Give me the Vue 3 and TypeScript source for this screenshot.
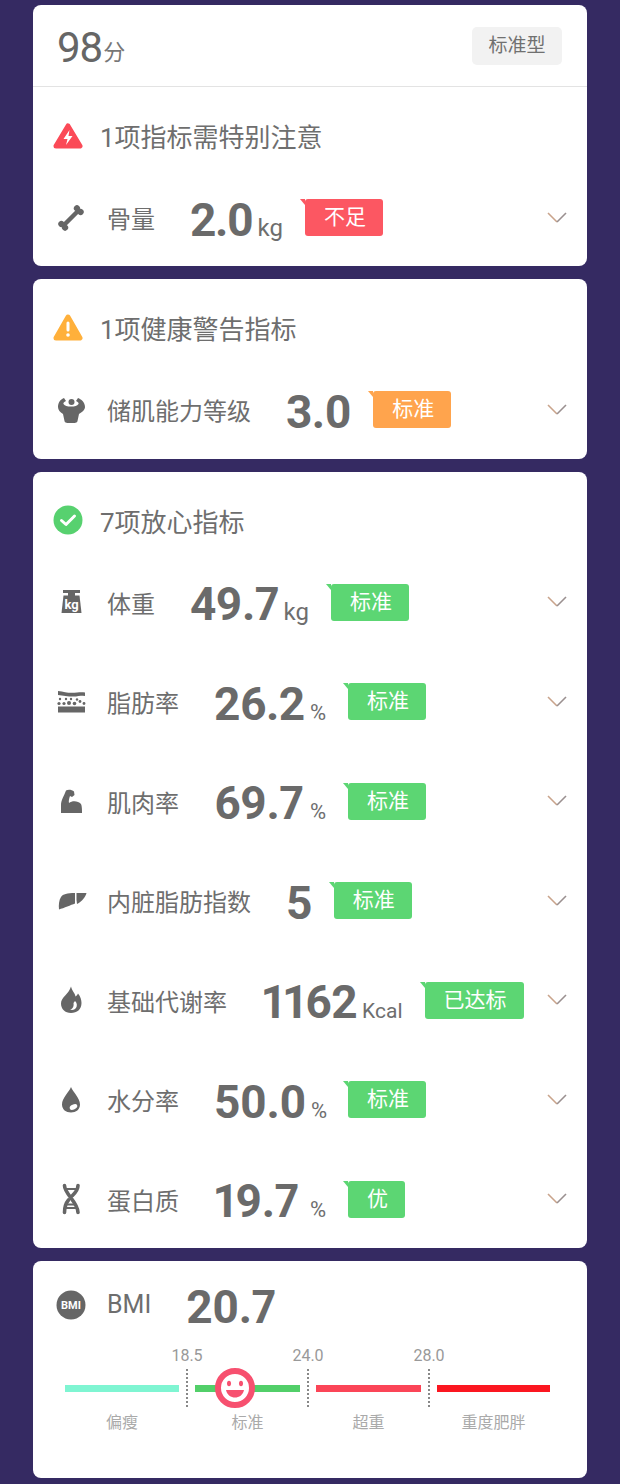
<script setup lang="ts">
interface Metric {
  icon: string
  label: string
  value: string
  unit?: string
  tag: string
  tone: 'red' | 'orange' | 'green'
}

const danger: Metric[] = [
  { icon: 'bone', label: '骨量', value: '2.0', unit: 'kg', tag: '不足', tone: 'red' }
]

const warning: Metric[] = [
  { icon: 'body', label: '储肌能力等级', value: '3.0', tag: '标准', tone: 'orange' }
]

const safe: Metric[] = [
  { icon: 'weight', label: '体重', value: '49.7', unit: 'kg', tag: '标准', tone: 'green' },
  { icon: 'fat', label: '脂肪率', value: '26.2', unit: '%', tag: '标准', tone: 'green' },
  { icon: 'arm', label: '肌肉率', value: '69.7', unit: '%', tag: '标准', tone: 'green' },
  { icon: 'liver', label: '内脏脂肪指数', value: '5', tag: '标准', tone: 'green' },
  { icon: 'flame', label: '基础代谢率', value: '1162', unit: 'Kcal', tag: '已达标', tone: 'green' },
  { icon: 'drop', label: '水分率', value: '50.0', unit: '%', tag: '标准', tone: 'green' },
  { icon: 'dna', label: '蛋白质', value: '19.7', unit: '%', tag: '优', tone: 'green' }
]

const groups = [
  { key: 'warning', title: '1项健康警告指标', rows: warning },
  { key: 'safe', title: '7项放心指标', rows: safe }
]

const bmiScale = [
  { name: '偏瘦', limit: '18.5', cls: 'thin' },
  { name: '标准', limit: '24.0', cls: 'normal' },
  { name: '超重', limit: '28.0', cls: 'over' },
  { name: '重度肥胖', limit: '', cls: 'obese' }
]
</script>

<template>
  <div class="page">
    <section class="card card-first">
      <div class="score-bar">
        <div class="score"><span class="score-num">98</span><span class="score-unit">分</span></div>
        <div class="body-type">标准型</div>
      </div>
      <div class="group-title">
        <svg class="state-icon" viewBox="0 0 30 30">
          <path d="M15 5 L27 25 H3 Z" fill="#fb4a57" stroke="#fb4a57" stroke-width="5" stroke-linejoin="round" />
          <path d="M16.5 9 L10.5 18 H14.5 L13 24 L19.5 15 H15.5 Z" fill="#fff" />
        </svg>
        <span>1项指标需特别注意</span>
      </div>
      <div v-for="row in danger" :key="row.label" class="row row-first">
        <svg class="row-icon" viewBox="0 0 32 32">
          <g transform="rotate(-45 16 16)" fill="#666">
            <rect x="5" y="13.8" width="22" height="4.4" />
            <circle cx="5" cy="13.4" r="3.1" />
            <circle cx="5" cy="18.6" r="3.1" />
            <circle cx="27" cy="13.4" r="3.1" />
            <circle cx="27" cy="18.6" r="3.1" />
          </g>
        </svg>
        <span class="label">{{ row.label }}</span>
        <span class="reading">
          <span class="value">{{ row.value }}</span>
          <span class="unit">{{ row.unit }}</span>
        </span>
        <span class="tag" :class="row.tone">{{ row.tag }}</span>
        <svg class="chevron" viewBox="0 0 20 12">
          <path class="arm-left" d="M1 1 L10 10" />
          <path class="arm-right" d="M10 10 L19 1" />
        </svg>
      </div>
    </section>

    <section v-for="group in groups" :key="group.key" class="card">
      <div class="group-title">
        <svg v-if="group.key === 'warning'" class="state-icon" viewBox="0 0 30 30">
          <path d="M15 4 L27 25 H3 Z" fill="#ffb03b" stroke="#ffb03b" stroke-width="5" stroke-linejoin="round" />
          <rect x="13.5" y="8.5" width="3" height="10" rx="1.5" fill="#fff" />
          <circle cx="15" cy="22" r="1.8" fill="#fff" />
        </svg>
        <svg v-else class="state-icon" viewBox="0 0 30 30">
          <circle cx="15" cy="15" r="14.5" fill="#57d16f" />
          <path d="M8.5 15.5 L13 19.5 L21.5 11" fill="none" stroke="#fff" stroke-width="3" stroke-linecap="round" stroke-linejoin="round" />
        </svg>
        <span>{{ group.title }}</span>
      </div>
      <div v-for="row in group.rows" :key="row.label" class="row">
        <svg class="row-icon" viewBox="0 0 32 32">
          <template v-if="row.icon === 'body'">
            <circle cx="16.5" cy="8" r="3" fill="#666" />
            <path fill="#666" d="M3 13 C3 8 6 5 9 4 L11 7 C9 8 8 9 8.5 10 C10 12 12 12.5 16 12.5 C20 12.5 22 12 23.5 10 C24 9 23 8 21 7 L23 4 C26 5 30 8 30 13 C30 16 27 18 24 20 L22.5 27 C22 29 20 29 16 29 C12 29 10 29 9.5 27 L8 20 C5 18 3 16 3 13 Z" />
          </template>
          <template v-else-if="row.icon === 'weight'">
            <rect x="8" y="4" width="17" height="3" fill="#666" />
            <rect x="13" y="7" width="7" height="3" fill="#666" />
            <path d="M8.5 9.5 H24.5 L26.5 27 H6.5 Z" fill="#666" />
            <text x="16.5" y="22.5" class="icon-text" font-size="13">kg</text>
          </template>
          <template v-else-if="row.icon === 'fat'">
            <path d="M3 5 C10 6 14 7.5 22 6.5 C25 6 28 6 30 6.5 V10 C26 9.5 24 9.5 21 10.5 C14 11 9 9.5 3 9 Z" fill="#666" />
            <g fill="#666">
              <circle cx="5" cy="13" r="1.2" /><circle cx="11" cy="13" r="1.2" /><circle cx="16" cy="13" r="1.2" /><circle cx="22" cy="13.5" r="1.2" />
              <circle cx="4" cy="17.5" r="1.6" /><circle cx="9" cy="17.5" r="1.6" /><circle cx="14" cy="17" r="2" /><circle cx="19.5" cy="17.5" r="1.8" /><circle cx="25" cy="15.5" r="1.4" /><circle cx="29" cy="17.5" r="1.4" />
            </g>
            <rect x="3" y="20.5" width="27" height="6" fill="#666" />
          </template>
          <template v-else-if="row.icon === 'arm'">
            <path fill="#666" d="M6 28 V20 C6 15 9 11 11 5.5 C13 4 17 4.5 19 6.5 L19.5 10 L17 12 L15 11 C14 14 13.5 16 14 18 C17 15.5 23 15.5 26 19 C27 21 27 25 27 28 Z" />
          </template>
          <template v-else-if="row.icon === 'liver'">
            <path fill="#666" d="M4 24.5 C3.5 20 4 15 6 12 C8 9 12 8 20 8 V18.5 C16 20 9 23 4 24.5 Z" />
            <path fill="#666" d="M21.5 8 H31.5 C30.5 12 27 16.5 22 19 L21.5 15 Z" />
          </template>
          <template v-else-if="row.icon === 'flame'">
            <path fill="#666" d="M16 2.5 C17 7 20 9 20.5 12.5 C22 11.5 22.5 10.5 23 9.5 C25.5 12.5 26.5 16 26.5 19 C26.5 25.5 22 29 16 29 C10 29 6 25 6 19.5 C6 13 14 10 16 2.5 Z" />
            <path fill="#fff" d="M20 17 C22 19 22.5 21.5 21 24 C19.5 26 17 26.5 15 25.5 C18 25 19 22 18.5 19 Z" />
          </template>
          <template v-else-if="row.icon === 'drop'">
            <path fill="#666" d="M16 3 C18 8 25 14 25 20.5 C25 25.5 21 28.5 16 28.5 C11 28.5 7 25.5 7 20.5 C7 14 14 8 16 3 Z" />
            <ellipse cx="18.5" cy="23" rx="4" ry="2.4" transform="rotate(-25 18.5 23)" fill="#fff" />
          </template>
          <template v-else-if="row.icon === 'dna'">
            <g fill="none" stroke="#666" stroke-width="3.6" stroke-linecap="round">
              <path d="M9.5 2.5 C9.5 11 23 19 23 29.5" />
              <path d="M23 2.5 C23 7 20 10 17.5 12.5 M13.5 17 C11 20 9.5 24 9.5 29.5" />
            </g>
            <g stroke="#666" stroke-width="2">
              <path d="M10 6 H22 M10.5 25 H21.5 M12 21.5 H20" />
            </g>
          </template>
        </svg>
        <span class="label">{{ row.label }}</span>
        <span class="reading" :class="{ 'reading-pct': row.unit === '%' }">
          <span class="value">{{ row.value }}</span>
          <span v-if="row.unit" class="unit" :class="{ kcal: row.unit === 'Kcal', pct: row.unit === '%' }">{{ row.unit }}</span>
        </span>
        <span class="tag" :class="row.tone">{{ row.tag }}</span>
        <svg class="chevron" viewBox="0 0 20 12">
          <path class="arm-left" d="M1 1 L10 10" />
          <path class="arm-right" d="M10 10 L19 1" />
        </svg>
      </div>
    </section>

    <section class="card card-bmi">
      <div class="row row-bmi">
        <svg class="row-icon" viewBox="0 0 32 32">
          <circle cx="16" cy="16" r="14.5" fill="#666" />
          <text x="16" y="20" class="icon-text" font-size="11">BMI</text>
        </svg>
        <span class="label label-latin">BMI</span>
        <span class="reading"><span class="value">20.7</span></span>
      </div>
      <div class="scale">
        <div v-for="(seg, i) in bmiScale" :key="seg.name" class="segment">
          <div class="bar" :class="seg.cls"></div>
          <div class="seg-name">{{ seg.name }}</div>
          <template v-if="seg.limit">
            <span class="limit">{{ seg.limit }}</span>
            <span class="tick"></span>
          </template>
          <svg v-if="i === 1" class="smiley" viewBox="0 0 40 40">
            <circle cx="20" cy="20" r="17" fill="#fff" stroke="#f7506f" stroke-width="6" />
            <ellipse cx="14" cy="15.5" rx="2" ry="2.8" fill="#f7506f" />
            <ellipse cx="26" cy="15.5" rx="2" ry="2.8" fill="#f7506f" />
            <path d="M11 22 H29 C28 27 24 29.5 20 29.5 C16 29.5 12 27 11 22 Z" fill="#f7506f" />
          </svg>
        </div>
      </div>
    </section>
  </div>
</template>

<style>
html,
body {
  margin: 0;
  background: #352a62;
}
</style>

<style scoped>
.page {
  box-sizing: border-box;
  height: 1484px;
  padding: 5px 33px 0;
  display: flex;
  flex-direction: column;
  gap: 13px;
  overflow: hidden;
  font-family: Roboto, "Noto Sans CJK SC", sans-serif;
  color: #6e6e6e;
}

.card {
  background: #fff;
  border-radius: 8px;
  overflow: hidden;
}

.score-bar {
  height: 81px;
  display: flex;
  align-items: center;
  justify-content: space-between;
  padding: 0 25px 0 24px;
  border-bottom: 1px solid #e3e3e3;
}

.score {
  display: flex;
  align-items: center;
  margin-top: 4px;
}

.score-num {
  font-size: 42px;
  line-height: 1;
  letter-spacing: -1px;
  color: #666;
}

.score-unit {
  font-size: 22px;
  margin: 4px 0 0 1px;
  color: #777;
}

.body-type {
  width: 90px;
  height: 38px;
  line-height: 38px;
  text-align: center;
  font-size: 19px;
  color: #707070;
  background: #f2f2f2;
  border-radius: 5px;
}

.group-title {
  box-sizing: border-box;
  height: 80px;
  padding: 17px 0 0 20px;
  display: flex;
  align-items: center;
  gap: 17px;
  font-size: 26px;
}

.state-icon {
  width: 30px;
  height: 30px;
  flex: none;
}

.row {
  box-sizing: border-box;
  height: 99.5px;
  padding: 2px 20px 0 22px;
  display: flex;
  align-items: center;
}

.row-first {
  height: 99px;
}

.row-first .value {
  letter-spacing: -1.5px;
}

.row-icon {
  width: 32px;
  height: 32px;
  flex: none;
  margin-right: 20px;
}

.icon-text {
  fill: #fff;
  font-family: Roboto, sans-serif;
  font-weight: 700;
  text-anchor: middle;
}

.label {
  font-size: 24px;
  white-space: nowrap;
}

.reading {
  margin-left: 35px;
  display: flex;
  align-items: baseline;
  gap: 5px;
  padding-top: 4px;
}

.reading-pct {
  width: 112px;
  justify-content: space-between;
}

.value {
  font-size: 46px;
  font-weight: 700;
  line-height: 1;
  letter-spacing: -0.6px;
  font-variant-numeric: proportional-nums;
  color: #6a6a6a;
}

.unit {
  font-size: 24px;
}

.unit.kcal {
  font-size: 21px;
}

.unit.pct {
  font-size: 22px;
}

.tag {
  position: relative;
  height: 37px;
  line-height: 37px;
  margin-left: 22px;
  padding: 0 17px 0 19px;
  font-size: 21px;
  color: #fff;
  border-radius: 3px;
  white-space: nowrap;
}

.tag::before {
  content: "";
  position: absolute;
  left: -5px;
  top: 0;
  border-top: 6px solid currentColor;
  border-left: 5px solid transparent;
}

.tag.red {
  background: #fc5762;
}

.tag.red::before {
  border-top-color: #fc5762;
}

.tag.orange {
  background: #ffa44d;
}

.tag.orange::before {
  border-top-color: #ffa44d;
}

.tag.green {
  background: #5cd673;
}

.tag.green::before {
  border-top-color: #5cd673;
}

.chevron {
  width: 20px;
  height: 12px;
  margin-left: auto;
  flex: none;
}

.chevron path {
  fill: none;
  stroke-width: 1.6;
}

.chevron .arm-left {
  stroke: #c9a48c;
}

.chevron .arm-right {
  stroke: #9a9090;
}

.card-bmi {
  height: 217px;
}

.row-bmi {
  height: 87px;
  padding-top: 0;
}

.label-latin {
  font-size: 25px;
}

.scale {
  display: grid;
  grid-template-columns: 114px 105px 105px 113px;
  column-gap: 16px;
  padding-left: 32px;
}

.segment {
  position: relative;
  padding-top: 37px;
}

.bar {
  height: 7px;
}

.bar.thin {
  background: #7ff5d2;
}

.bar.normal {
  background: #52cf69;
}

.bar.over {
  background: #fb4557;
}

.bar.obese {
  background: #fb1620;
}

.seg-name {
  margin-top: 20px;
  font-size: 16px;
  line-height: 22px;
  text-align: center;
  color: #aaa;
  white-space: nowrap;
}

.limit {
  position: absolute;
  right: -8px;
  top: -1px;
  transform: translateX(50%);
  font-size: 16px;
  line-height: 18px;
  color: #999;
}

.tick {
  position: absolute;
  right: -9px;
  top: 21px;
  height: 38px;
  border-left: 2px dotted #888;
}

.smiley {
  position: absolute;
  left: 20px;
  top: 20px;
  width: 40px;
  height: 40px;
}
</style>
